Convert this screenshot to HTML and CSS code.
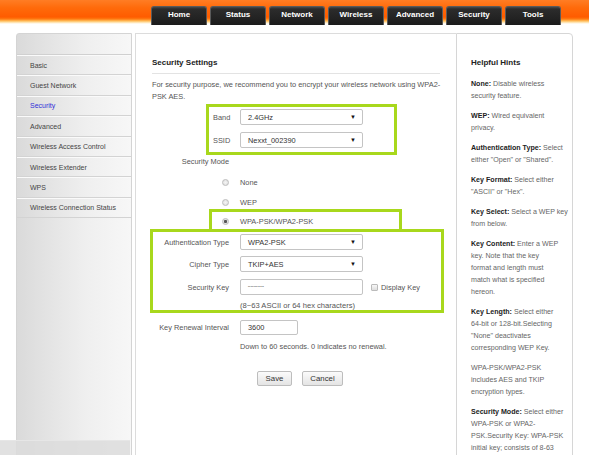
FILE: index.html
```html
<!DOCTYPE html>
<html>
<head>
<meta charset="utf-8">
<title>Wireless Security</title>
<link rel="stylesheet" href="styles.css">
</head>
<body>
<header class="topbar">
  <nav class="tabs">
    <a class="tab">Home</a>
    <a class="tab">Status</a>
    <a class="tab">Network</a>
    <a class="tab">Wireless</a>
    <a class="tab">Advanced</a>
    <a class="tab">Security</a>
    <a class="tab">Tools</a>
  </nav>
</header>
<div class="layout">
  <aside class="sidebar">
    <div class="side-head"></div>
    <div class="side-item">Basic</div>
    <div class="side-item">Guest Network</div>
    <div class="side-item active">Security</div>
    <div class="side-item">Advanced</div>
    <div class="side-item">Wireless Access Control</div>
    <div class="side-item">Wireless Extender</div>
    <div class="side-item">WPS</div>
    <div class="side-item">Wireless Connection Status</div>
  </aside>

  <main class="main">
    <h1 class="title">Security Settings</h1>
    <p class="desc">For security purpose, we recommend you to encrypt your wireless network using WPA2-PSK AES.</p>

    <div class="hl hl-band">
      <div class="row">
        <span class="lbl lbl-band">Band</span>
        <div class="select"><span>2.4GHz</span><span class="arrow">▼</span></div>
      </div>
      <div class="row row-ssid">
        <span class="lbl lbl-band">SSID</span>
        <div class="select"><span>Nexxt_002390</span><span class="arrow">▼</span></div>
      </div>
    </div>

    <div class="row row-mode">
      <span class="lbl lbl-wide">Security Mode</span>
    </div>
    <div class="row row-radio first">
      <span class="lbl lbl-wide"><span class="radio"></span></span>
      <span class="ctl">None</span>
    </div>
    <div class="row row-radio">
      <span class="lbl lbl-wide"><span class="radio"></span></span>
      <span class="ctl">WEP</span>
    </div>

    <div class="hl hl-wpa">
      <div class="row row-radio">
        <span class="lbl lbl-wpa"><span class="radio checked"></span></span>
        <span class="ctl">WPA-PSK/WPA2-PSK</span>
      </div>
    </div>

    <div class="hl hl-key">
      <div class="row row-auth">
        <span class="lbl lbl-key">Authentication Type</span>
        <div class="select"><span>WPA2-PSK</span><span class="arrow">▼</span></div>
      </div>
      <div class="row row-cipher">
        <span class="lbl lbl-key">Cipher Type</span>
        <div class="select"><span>TKIP+AES</span><span class="arrow">▼</span></div>
      </div>
      <div class="row row-seckey">
        <span class="lbl lbl-key">Security Key</span>
        <div class="input input-key"><span class="dots">••••••••••••</span></div>
        <span class="checkbox"></span>
        <span class="chk-label">Display Key</span>
      </div>
      <div class="row row-hint">
        <span class="lbl lbl-key"></span>
        <span class="ctl hint-text">(8~63 ASCII or 64 hex characters)</span>
      </div>
    </div>

    <div class="row row-renew">
      <span class="lbl lbl-wide">Key Renewal Interval</span>
      <div class="input input-renew">3600</div>
    </div>
    <p class="note">Down to 60 seconds. 0 indicates no renewal.</p>

    <div class="buttons">
      <button class="btn btn-save">Save</button>
      <button class="btn btn-cancel">Cancel</button>
    </div>
  </main>

  <aside class="hints">
    <h2 class="hints-title">Helpful Hints</h2>
    <p><b>None:</b> Disable wireless<br>security feature.</p>
    <p><b>WEP:</b> Wired equivalent<br>privacy.</p>
    <p><b>Authentication Type:</b> Select<br>either "Open" or "Shared".</p>
    <p><b>Key Format:</b> Select either<br>"ASCII" or "Hex".</p>
    <p><b>Key Select:</b> Select a WEP key<br>from below.</p>
    <p><b>Key Content:</b> Enter a WEP<br>key. Note that the key<br>format and length must<br>match what is specified<br>hereon.</p>
    <p><b>Key Length:</b> Select either<br>64-bit or 128-bit.Selecting<br>"None" deactivates<br>corresponding WEP Key.</p>
    <p>WPA-PSK/WPA2-PSK<br>includes AES and TKIP<br>encryption types.</p>
    <p><b>Security Mode:</b> Select either<br>WPA-PSK or WPA2-<br>PSK.Security Key: WPA-PSK<br>initial key; consists of 8-63<br>ASCII or 64 hex<br>characters.</p>
  </aside>
</div>
<div class="hbar"></div>
</body>
</html>
```

FILE: styles.css
```css
* { box-sizing: border-box; }

html, body {
  margin: 0;
  padding: 0;
}

body {
  width: 589px;
  height: 455px;
  overflow: hidden;
  position: relative;
  background: #fff;
  font-family: "Liberation Sans", Arial, sans-serif;
  font-size: 7px;
  color: #555;
}

/* ---------- top bar ---------- */
.topbar {
  height: 26px;
  background: linear-gradient(to bottom,
    #ff7d24 0px, #ff6a0a 8px, #ff5c00 17px, #ff7a10 19px,
    #ffbe5a 21px, #fff0d0 23px, #ffffff 24px);
}

.tabs {
  display: flex;
  gap: 3px;
  padding: 6px 0 0 151px;
}

.tab {
  width: 56px;
  height: 19px;
  display: flex;
  align-items: center;
  justify-content: center;
  padding-bottom: 3px;
  background: linear-gradient(to bottom, #4a4a4a 0, #2c2c2c 2px, #232323 60%, #1b1b1b 100%);
  border: 1px solid #5a5a5a;
  border-bottom: none;
  border-radius: 3px 3px 0 0;
  color: #fff;
  font-weight: bold;
  font-size: 8px;
}

/* ---------- layout ---------- */
.layout {
  display: flex;
  margin-top: 7px;
}

.sidebar {
  margin-left: 16px;
  width: 116px;
  height: 430px;
  border: 1px solid #d4d4d4;
  border-radius: 3px 0 0 0;
  background: linear-gradient(to right, #dadada, #efefef 60%, #f7f7f7);
}

.side-head {
  height: 21px;
  border-bottom: 1px solid #d0d0d0;
}

.side-item {
  height: 20.4px;
  display: flex;
  align-items: center;
  padding-left: 13px;
  border-top: 1px solid #fafafa;
  border-bottom: 1px solid #d3d3d3;
  color: #444;
}

.side-item.active {
  color: #3030d8;
}

/* ---------- main ---------- */
.main {
  margin-left: 3px;
  width: 321px;
  height: 430px;
  border: 1px solid #dcdcdc;
  border-right: none;
  padding-top: 24px;
  font-size: 7.4px;
}

.title {
  margin: 0 0 0 16px;
  width: 288px;
  font-size: 8px;
  line-height: 10px;
  font-weight: bold;
  color: #222;
  padding-bottom: 5px;
  border-bottom: 1px solid #e3e3e3;
}

.desc {
  margin: 5px 0 0 16px;
  width: 292px;
  line-height: 11.5px;
}

.row {
  display: flex;
  align-items: center;
}

.lbl {
  flex: none;
  display: flex;
  justify-content: flex-end;
  align-items: center;
  margin-right: 11px;
  white-space: nowrap;
}

.lbl-wide { width: 93px; }
.lbl-key { width: 76px; }
.lbl-wpa { width: 17px; }
.lbl-band { width: 27px; justify-content: flex-start; }

.hl {
  border: 3px solid #a8d81c;
}

.hl-band {
  margin: 2px 0 0 70px;
  width: 191px;
  padding: 2px 0 4px 4px;
}

.hl-band .lbl { margin-right: 0; }

.row-ssid { margin-top: 7px; }

.select {
  width: 123px;
  height: 16px;
  display: flex;
  align-items: center;
  justify-content: space-between;
  padding: 0 6px 0 7px;
  background: #fff;
  border: 1px solid #c4c4c4;
  border-radius: 2px;
  color: #333;
}

.arrow {
  font-size: 6px;
  color: #111;
}

.row-mode {
  margin-top: 1px;
  height: 10px;
}

.row-radio {
  height: 14px;
  margin-top: 6px;
}

.row-radio.first { margin-top: 9px; }

.ctl { color: #555; }

.radio {
  width: 7px;
  height: 7px;
  border-radius: 50%;
  border: 1px solid #bdbdbd;
  background: radial-gradient(circle, #f4f4f4, #dcdcdc);
}

.radio.checked {
  background: radial-gradient(circle, #555 0, #555 1.3px, #e2e2e2 1.8px);
}

.hl-wpa {
  margin-left: 73px;
  width: 193px;
  border-bottom: none;
  padding: 2px 0 1px 0;
}

.hl-wpa .row-radio { margin-top: 0; }

.hl-key {
  margin-left: 14px;
  width: 294px;
  height: 84px;
}

.row-auth { margin-top: 2px; }
.row-cipher { margin-top: 6px; }
.row-seckey { margin-top: 7px; }
.row-hint { margin-top: 6px; line-height: 9px; }

.hint-text {
  font-size: 7.6px;
}

.input {
  height: 16px;
  display: flex;
  align-items: center;
  padding-left: 7px;
  background: #fff;
  border: 1px solid #c4c4c4;
  border-radius: 2px;
  color: #333;
}

.input-key { width: 123px; }

.dots {
  font-size: 3px;
  letter-spacing: 0.3px;
  color: #444;
}

.checkbox {
  width: 7px;
  height: 7px;
  margin-left: 8px;
  border: 1px solid #bbb;
  border-radius: 1px;
  background: linear-gradient(#f7f7f7, #dedede);
}

.chk-label {
  margin-left: 3px;
}

.row-renew {
  margin-top: 7px;
}

.input-renew {
  width: 58px;
  height: 15px;
}

.note {
  margin: 7px 0 0 104px;
  line-height: 10px;
}

.buttons {
  display: flex;
  gap: 10px;
  padding-left: 121px;
  margin-top: 19px;
}

.btn {
  height: 15px;
  padding: 0;
  font-family: "Liberation Sans", Arial, sans-serif;
  font-size: 7.8px;
  color: #333;
  background: linear-gradient(#fbfbfb, #e4e4e4);
  border: 1px solid #bdbdbd;
  border-radius: 2px;
}

.btn-save { width: 35px; }
.btn-cancel { width: 41px; }

/* ---------- hints ---------- */
.hints {
  width: 117px;
  height: 430px;
  border: 1px solid #d6d6d6;
  border-radius: 0 4px 0 0;
  padding: 24px 0 0 14px;
  overflow: hidden;
  font-size: 7.1px;
}

.hints-title {
  margin: 0 0 10px;
  font-size: 8px;
  line-height: 10px;
  color: #222;
}

.hints p {
  margin: 0 0 8px;
  white-space: nowrap;
  line-height: 12px;
  color: #666;
}

.hints b {
  color: #222;
}

.hbar {
  position: absolute;
  left: 0;
  top: 440px;
  width: 130px;
  height: 15px;
  background: rgba(220, 220, 220, 0.85);
  border-top: 1px solid #e6e6e6;
}
```
